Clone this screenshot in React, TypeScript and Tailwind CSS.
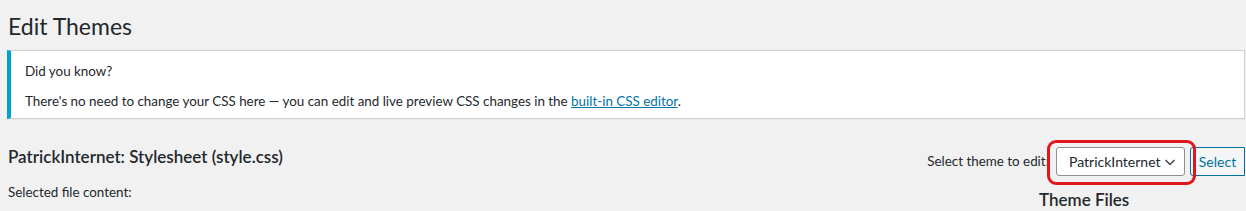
import React from "react";

export default function App() {
  return (
    <div className="w-[1246px] h-[211px] overflow-hidden bg-[#f1f1f1] text-[#23282d] font-['Lato',sans-serif] text-[13.4px]">
      <div className="pl-[8px] pr-[1px]">
        <h1 className="text-[23px] font-normal leading-[30px] pt-[11px] pb-[4px]">Edit Themes</h1>
        <div className="mt-[5px] ml-[-1px] bg-white border border-[#ccd0d4] border-l-4 border-l-[#00a0d2] shadow-[0_1px_1px_rgba(0,0,0,0.04)] pl-[14px] pr-[12px] pt-[10px] pb-[7px]">
          <p className="leading-[20px] mb-[10px]">Did you know?</p>
          <p className="leading-[20px]">
            There's no need to change your CSS here — you can edit and live preview CSS changes in the{" "}
            <a href="#" className="text-[#0073aa] underline">built-in CSS editor</a>.
          </p>
        </div>
        <div className="flex items-start justify-between mt-[26px]">
          <div>
            <h2 className="text-[17px] font-semibold leading-[22px] pt-[1px]">PatrickInternet: Stylesheet (style.css)</h2>
            <p className="mt-[14px] leading-[20px]">Selected file content:</p>
          </div>
          <div className="flex flex-col items-end">
            <div className="flex items-center mt-[2px]">
              <span className="mr-[7px]">Select theme to edit:</span>
              <div className="relative">
                <div className="w-[129px] h-[29px] border border-[#8c8f94] rounded-[3px] bg-white flex items-center justify-between pl-[12px] pr-[7px] text-[14px]">
                  <span>PatrickInternet</span>
                  <svg width="14" height="14" viewBox="0 0 14 14" fill="none" stroke="#3c434a" strokeWidth="1.4">
                    <path d="M2.5 5 L7 9.5 L11.5 5" />
                  </svg>
                </div>
                <div className="absolute left-[-9px] top-[-7px] w-[149px] h-[45px] border-[3px] border-[#e0151e] rounded-[9px] pointer-events-none" />
              </div>
              <button className="ml-[5px] h-[29px] w-[55px] flex items-center justify-center border border-[#0071a1] text-[#0071a1] bg-[#f3f5f6] rounded-l-[3px] text-[14px]">Select</button>
            </div>
            <div className="w-[206px]">
              <h3 className="text-[17px] font-semibold mt-[13px] leading-[22px]">Theme Files</h3>
            </div>
          </div>
        </div>
      </div>
    </div>
  );
}
